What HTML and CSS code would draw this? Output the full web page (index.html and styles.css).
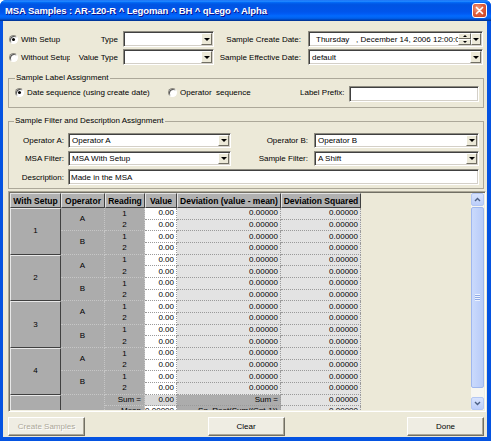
FILE: index.html
```html
<!DOCTYPE html>
<html lang="en">
<head>
    <meta charset="UTF-8">
    <title>MSA Samples</title>
    <link rel="stylesheet" href="styles.css">
</head>
<body>
    <div class="window">
        <div class="titlebar">
            <span class="title">MSA Samples : AR-120-R ^ Legoman ^ BH ^ qLego ^ Alpha</span>
            <span class="close-btn">
                <svg width="13" height="13" viewBox="0 0 13 13"><path d="M3.5 3.5 L9.5 9.5 M9.5 3.5 L3.5 9.5" stroke="#fff" stroke-width="1.7" stroke-linecap="round"/></svg>
            </span>
        </div>

        <div class="client">
            <!-- setup / type / dates -->
            <div class="top-form">
                <label class="opt"><span class="radio checked"></span>With Setup</label>
                <span class="lbl">Type</span>
                <div class="combo"><span class="value"></span><span class="drop"></span></div>
                <span class="lbl">Sample Create Date:</span>
                <div class="combo date">
                    <span class="value">Thursday&nbsp;&nbsp;&nbsp;, December 14, 2006 12:00:00</span>
                    <span class="spin"><span class="spin-up"></span><span class="spin-down"></span></span>
                    <span class="drop"></span>
                </div>

                <label class="opt"><span class="radio"></span>Without Setup</label>
                <span class="lbl">Value Type</span>
                <div class="combo"><span class="value"></span><span class="drop"></span></div>
                <span class="lbl">Sample Effective Date:</span>
                <div class="combo"><span class="value">default</span><span class="drop"></span></div>
            </div>

            <fieldset class="group label-group">
                <legend>Sample Label Assignment</legend>
                <div class="label-row">
                    <label class="opt seq-date"><span class="radio checked"></span>Date sequence (using create date)</label>
                    <label class="opt seq-op"><span class="radio"></span>Operator&nbsp; sequence</label>
                    <span class="lbl prefix-lbl">Label Prefix:</span>
                    <div class="textbox prefix"></div>
                </div>
            </fieldset>

            <fieldset class="group filter-group">
                <legend>Sample Filter and Description Assignment</legend>
                <div class="filter-grid">
                    <span class="lbl">Operator A:</span>
                    <div class="combo"><span class="value">Operator A</span><span class="drop"></span></div>
                    <span class="lbl">Operator B:</span>
                    <div class="combo"><span class="value">Operator B</span><span class="drop"></span></div>

                    <span class="lbl">MSA Filter:</span>
                    <div class="combo"><span class="value">MSA With Setup</span><span class="drop"></span></div>
                    <span class="lbl">Sample Filter:</span>
                    <div class="combo"><span class="value">A Shift</span><span class="drop"></span></div>

                    <span class="lbl">Description:</span>
                    <div class="textbox description">Made in the MSA</div>
                </div>
            </fieldset>

            <!-- samples grid -->
            <div class="grid-frame">
                <div class="grid-view">
                    <div class="sheet">
                        <div class="cell hd">With Setup</div>
                        <div class="cell hd">Operator</div>
                        <div class="cell hd">Reading</div>
                        <div class="cell hd">Value</div>
                        <div class="cell hd">Deviation (value - mean)</div>
                        <div class="cell hd">Deviation Squared</div>

                        <div class="cell setup">1</div>
                        <div class="cell op">A</div>
                        <div class="cell rd">1</div><div class="cell val">0.00</div><div class="cell dev">0.00000</div><div class="cell dev">0.00000</div>
                        <div class="cell rd end">2</div><div class="cell val">0.00</div><div class="cell dev">0.00000</div><div class="cell dev">0.00000</div>
                        <div class="cell op">B</div>
                        <div class="cell rd">1</div><div class="cell val">0.00</div><div class="cell dev">0.00000</div><div class="cell dev">0.00000</div>
                        <div class="cell rd end">2</div><div class="cell val">0.00</div><div class="cell dev">0.00000</div><div class="cell dev">0.00000</div>

                        <div class="cell setup">2</div>
                        <div class="cell op">A</div>
                        <div class="cell rd">1</div><div class="cell val">0.00</div><div class="cell dev">0.00000</div><div class="cell dev">0.00000</div>
                        <div class="cell rd end">2</div><div class="cell val">0.00</div><div class="cell dev">0.00000</div><div class="cell dev">0.00000</div>
                        <div class="cell op">B</div>
                        <div class="cell rd">1</div><div class="cell val">0.00</div><div class="cell dev">0.00000</div><div class="cell dev">0.00000</div>
                        <div class="cell rd end">2</div><div class="cell val">0.00</div><div class="cell dev">0.00000</div><div class="cell dev">0.00000</div>

                        <div class="cell setup">3</div>
                        <div class="cell op">A</div>
                        <div class="cell rd">1</div><div class="cell val">0.00</div><div class="cell dev">0.00000</div><div class="cell dev">0.00000</div>
                        <div class="cell rd end">2</div><div class="cell val">0.00</div><div class="cell dev">0.00000</div><div class="cell dev">0.00000</div>
                        <div class="cell op">B</div>
                        <div class="cell rd">1</div><div class="cell val">0.00</div><div class="cell dev">0.00000</div><div class="cell dev">0.00000</div>
                        <div class="cell rd end">2</div><div class="cell val">0.00</div><div class="cell dev">0.00000</div><div class="cell dev">0.00000</div>

                        <div class="cell setup">4</div>
                        <div class="cell op">A</div>
                        <div class="cell rd">1</div><div class="cell val">0.00</div><div class="cell dev">0.00000</div><div class="cell dev">0.00000</div>
                        <div class="cell rd end">2</div><div class="cell val">0.00</div><div class="cell dev">0.00000</div><div class="cell dev">0.00000</div>
                        <div class="cell op">B</div>
                        <div class="cell rd">1</div><div class="cell val">0.00</div><div class="cell dev">0.00000</div><div class="cell dev">0.00000</div>
                        <div class="cell rd end">2</div><div class="cell val">0.00</div><div class="cell dev">0.00000</div><div class="cell dev">0.00000</div>

                        <!-- totals -->
                        <div class="cell setup totals"></div>
                        <div class="cell op"></div>
                        <div class="cell rd sum-lbl">Sum =</div><div class="cell val sum">0.00</div><div class="cell dev dark">Sum =</div><div class="cell dev">0.00000</div>
                        <div class="cell rd sum-lbl">Mean</div><div class="cell val">0.00000</div><div class="cell dev dark">Sq. Root(Sum/(Cnt-1))</div><div class="cell dev">0.00000</div>
                    </div>
                </div>
                <div class="vscroll">
                    <span class="sb-btn"><svg width="7" height="5" viewBox="0 0 7 5"><path d="M1 4 L3.5 1.5 L6 4" fill="none" stroke="#4d6185" stroke-width="1.4"/></svg></span>
                    <span class="sb-thumb"><span class="grip"></span></span>
                    <span class="sb-track"></span>
                    <span class="sb-btn"><svg width="7" height="5" viewBox="0 0 7 5"><path d="M1 1 L3.5 3.5 L6 1" fill="none" stroke="#4d6185" stroke-width="1.4"/></svg></span>
                </div>
            </div>

            <div class="buttons">
                <button class="btn" disabled>Create Samples</button>
                <button class="btn">Clear</button>
                <button class="btn">Done</button>
            </div>
        </div>
    </div>
</body>
</html>
```

FILE: styles.css
```css
body {
    margin: 0;
    background: #fff;
    font-family: "Liberation Sans", Arial, sans-serif;
    font-size: 8px;
    color: #000;
}
.window {
    width: 491px;
    height: 441px;
    display: flex;
    flex-direction: column;
    background: #0553e1;
    border-radius: 6px 6px 0 0;
    overflow: hidden;
}
.titlebar {
    height: 21px;
    flex: none;
    display: flex;
    align-items: center;
    justify-content: space-between;
    padding: 0 4px 0 5px;
    background: linear-gradient(to bottom, #0058ee 0%, #3593ff 4%, #288eff 6%, #127dff 8%, #036ffc 10%, #0262ee 14%, #0057e5 20%, #0054e3 24%, #0055eb 56%, #005bf5 66%, #026afe 76%, #0062ef 86%, #0052d6 92%, #0040ab 94%, #003092 100%);
}
.title {
    color: #fff;
    font-weight: bold;
    font-size: 9.5px;
    letter-spacing: -0.1px;
    text-shadow: 1px 1px 0 #0f1089;
    white-space: nowrap;
}
.close-btn {
    width: 15px;
    height: 15px;
    box-sizing: border-box;
    border: 1px solid #fff;
    border-radius: 3px;
    background: radial-gradient(circle at 35% 35%, #f0a184 0%, #e0603e 45%, #c4401f 100%);
    display: flex;
    align-items: center;
    justify-content: center;
}
.client {
    flex: 1;
    margin: 0 4px 4px 3px;
    padding: 10px 1px 0 5px;
    background: #ece9d8;
    display: flex;
    flex-direction: column;
}

/* top form */
.top-form {
    display: grid;
    grid-template-columns: 62px 53px 91px 94px 175px;
    grid-auto-rows: 16px;
    row-gap: 2px;
}
.lbl {
    display: flex;
    align-items: center;
    justify-content: flex-end;
    white-space: nowrap;
}
.top-form .lbl {
    padding-right: 5px;
}
.top-form .lbl:nth-of-type(2),
.top-form .lbl:nth-of-type(4) {
    padding-right: 7px;
}
.opt {
    display: flex;
    align-items: center;
    white-space: nowrap;
    overflow: hidden;
}
.radio {
    width: 9px;
    height: 9px;
    flex: none;
    box-sizing: border-box;
    border-radius: 50%;
    border: 1px solid;
    border-color: #8d8b80 #fff #fff #8d8b80;
    background: #fff;
    box-shadow: inset 1px 1px 0 #555;
    margin: 0 3px 0 1px;
    position: relative;
}
.radio.checked::after {
    content: "";
    position: absolute;
    left: 2px;
    top: 2px;
    width: 3px;
    height: 3px;
    border-radius: 50%;
    background: #000;
}

/* combo boxes and text boxes */
.combo,
.textbox {
    box-sizing: border-box;
    background: #fff;
    border: 1px solid;
    border-color: #8d8b80 #fff #fff #8d8b80;
    box-shadow: inset 1px 1px 0 #404040, inset -1px -1px 0 #d4d0c8;
    padding: 1px;
}
.combo {
    display: flex;
    align-items: stretch;
}
.combo .value {
    flex: 1;
    overflow: hidden;
    white-space: nowrap;
    padding-left: 2px;
    display: flex;
    align-items: center;
}
.combo.date .value {
    padding-left: 6px;
}
.drop {
    width: 11px;
    flex: none;
    box-sizing: border-box;
    background: #ece9d8;
    border: 1px solid;
    border-color: #fff #716f64 #716f64 #fff;
    display: flex;
    align-items: center;
    justify-content: center;
}
.drop::after {
    content: "";
    border-top: 3px solid #000;
    border-left: 3px solid transparent;
    border-right: 3px solid transparent;
}
.date .drop {
    width: 10px;
}
.spin {
    width: 13px;
    flex: none;
    display: flex;
    flex-direction: column;
}
.spin-up,
.spin-down {
    flex: 1;
    background: #ece9d8;
    border: 1px solid;
    border-color: #fff #716f64 #716f64 #fff;
    display: flex;
    align-items: center;
    justify-content: center;
}
.spin-up::after {
    content: "";
    border-bottom: 2px solid #000;
    border-left: 2px solid transparent;
    border-right: 2px solid transparent;
}
.spin-down::after {
    content: "";
    border-top: 2px solid #000;
    border-left: 2px solid transparent;
    border-right: 2px solid transparent;
}
.textbox {
    display: flex;
    align-items: center;
    padding-left: 2px;
}

/* group boxes */
.group {
    margin: 0 2px 0 0;
    border: 1px solid #aca899;
    min-width: 0;
}
.group legend {
    padding: 0 1px;
    line-height: 10px;
}
.label-group {
    margin-top: 8px;
    padding: 3px 4px 5px 6px;
}
.label-row {
    display: flex;
    align-items: flex-start;
    height: 16px;
}
.label-row .opt,
.label-row .lbl {
    height: 12px;
}
.label-row .radio {
    margin-left: 0;
}
.seq-date {
    width: 153px;
}
.seq-op {
    width: 132px;
}
.prefix-lbl {
    width: 49px;
    justify-content: flex-start;
}
.prefix {
    flex: 1;
    height: 16px;
}
.filter-group {
    margin-top: 8px;
    padding: 7px 4px 3px 0;
}
.filter-group legend {
    margin-left: 5px;
}
.filter-grid {
    display: grid;
    grid-template-columns: 59px 163px 83px 165px;
    grid-template-rows: 15px 15px 16px;
    row-gap: 3px;
}
.filter-grid .lbl {
    padding-right: 4px;
}
.filter-grid .lbl:nth-child(3),
.filter-grid .lbl:nth-child(7) {
    padding-right: 6px;
}
.description {
    grid-column: 2 / -1;
}

/* samples grid */
.grid-frame {
    margin: 2px 0 0 0;
    height: 221px;
    box-sizing: border-box;
    border: 1px solid;
    border-color: #aca899 #fff #fff #aca899;
    box-shadow: inset 1px 1px 0 #716f64, inset -1px -1px 0 #f1efe2;
    padding: 1px;
    display: flex;
}
.grid-view {
    flex: 1;
    overflow: hidden;
    background: #ece9d8;
}
.sheet {
    display: grid;
    grid-template-columns: 51px 44px 40px 32px 104px 80px;
    grid-template-rows: 15px;
    grid-auto-rows: 11.667px;
    width: 351px;
}
.cell {
    box-sizing: border-box;
    overflow: hidden;
    white-space: nowrap;
    display: flex;
    align-items: center;
    line-height: 10px;
}
.hd {
    background: #b1b1b1;
    font-weight: bold;
    font-size: 8.5px;
    justify-content: center;
    border: 1px solid;
    border-color: #e4e4e4 #404040 #404040 #e4e4e4;
}
.setup {
    grid-row: span 4;
    background: #acacac;
    justify-content: center;
    border: 1px solid;
    border-color: #e8e8e8 #404040 #404040 #e8e8e8;
}
.setup.totals {
    grid-row: span 2;
}
.op {
    grid-row: span 2;
    background: #acacac;
    justify-content: center;
    border-right: 1px dotted #c6c6c6;
    border-bottom: 1px dotted #c6c6c6;
}
.rd {
    background: #acacac;
    justify-content: center;
    border-right: 1px dotted #c6c6c6;
}
.rd.end {
    border-bottom: 1px dotted #c6c6c6;
}
.rd.sum-lbl {
    justify-content: flex-end;
    padding-right: 3px;
    border-bottom: 1px dotted #c6c6c6;
}
.val,
.dev {
    justify-content: flex-end;
    padding-right: 2px;
    border-right: 1px dotted #9a9a9a;
    border-bottom: 1px dotted #9a9a9a;
}
.val {
    background: #fff;
}
.val.sum {
    background: #d9d9d9;
}
.dev {
    background: #e3e3e3;
}
.dev.dark {
    background: #acacac;
}

/* scrollbar */
.vscroll {
    width: 13px;
    flex: none;
    display: flex;
    flex-direction: column;
    background: #f7f6f1;
}
.sb-btn {
    height: 13px;
    flex: none;
    box-sizing: border-box;
    border: 1px solid #b4c7f3;
    border-radius: 2px;
    background: linear-gradient(#d8e3fd, #bccefa);
    display: flex;
    align-items: center;
    justify-content: center;
}
.sb-thumb {
    height: 181px;
    margin-top: 1px;
    flex: none;
    box-sizing: border-box;
    border: 1px solid #9fb7ee;
    border-radius: 2px;
    background: linear-gradient(to right, #cadafd, #b8cbf8);
    display: flex;
    align-items: center;
    justify-content: center;
}
.grip {
    width: 5px;
    height: 7px;
    background: repeating-linear-gradient(to bottom, #eef3fe 0, #eef3fe 1px, #8faae6 1px, #8faae6 2px);
}
.sb-track {
    flex: 1;
}

/* bottom buttons */
.buttons {
    margin: 5px 2px 0 0;
    display: flex;
    justify-content: space-between;
}
.btn {
    width: 77px;
    height: 19px;
    font-family: inherit;
    font-size: 8px;
    color: #000;
    background: #efede3;
    border: 1px solid;
    border-color: #fff #716f64 #716f64 #fff;
    box-shadow: inset -1px -1px 0 #aca899;
    padding: 0;
}
.btn:disabled {
    color: #aca899;
    text-shadow: 1px 1px 0 #fff;
}
```
